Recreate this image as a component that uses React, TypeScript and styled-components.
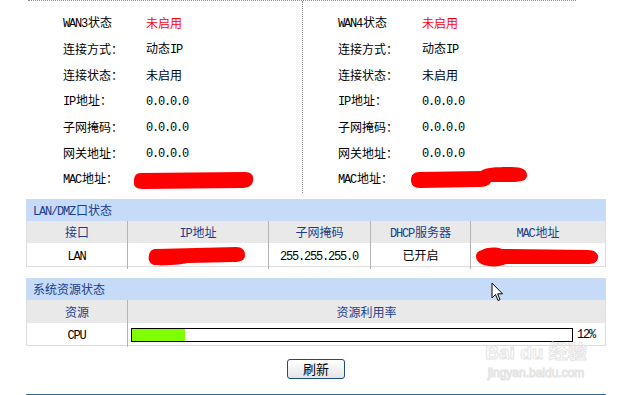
import styled, { createGlobalStyle } from 'styled-components'

const Global = createGlobalStyle`
  html, body {
    margin: 0;
    padding: 0;
    background: #ffffff;
  }
  body {
    font-family: 'Noto Sans CJK SC', 'Liberation Sans', sans-serif;
    font-size: 12px;
    color: #000000;
  }
`

const Page = styled.div`
  position: relative;
  width: 626px;
  height: 395px;
  overflow: hidden;
  padding-left: 26px;
  box-sizing: border-box;
`

const M = styled.span`
  font-family: 'Liberation Mono', monospace;
  font-size: 12px;
  letter-spacing: -1.2px;
  margin-right: 1px;
`

const WanPanel = styled.div`
  margin-left: 2px;
  width: 548px;
  border-top: 1px dotted #8c8c8c;
  display: grid;
  grid-template-columns: 275px 273px;
`

const WanCol = styled.div<{ $left?: boolean }>`
  padding: 8px 0 2px 35px;
  border-right: ${(p) => (p.$left ? '1px dotted #8c8c8c' : 'none')};
  box-sizing: border-box;
`

const WanRow = styled.div`
  display: flex;
  align-items: center;
  height: 26px;
`

const WanLabel = styled.span<{ $w: number }>`
  width: ${(p) => p.$w}px;
  flex: none;
`

const WanValue = styled.div<{ $red?: boolean }>`
  color: ${(p) => (p.$red ? '#ff0000' : '#000000')};
`

const Section = styled.section<{ $top: number }>`
  width: 580px;
  margin-top: ${(p) => p.$top}px;
`

const SectionHead = styled.div`
  height: 22px;
  line-height: 22px;
  background: #c6dbf8;
  color: #1a3d8c;
  padding-left: 7px;
`

const Grid = styled.div<{ $cols: string; $head?: boolean; $h: number }>`
  display: grid;
  grid-template-columns: ${(p) => p.$cols};
  height: ${(p) => p.$h}px;
  line-height: ${(p) => p.$h}px;
  background: ${(p) => (p.$head ? '#e9e9e9' : '#ffffff')};
  color: ${(p) => (p.$head ? '#1a3d8c' : '#000000')};
  border-left: 1px solid #dcdcdc;
  border-right: 1px solid #dcdcdc;
  border-bottom: ${(p) => (p.$head ? 'none' : '1px solid #dcdcdc')};
`

const Cell = styled.div`
  text-align: center;
  & + & {
    border-left: 1px solid #b4b4b4;
  }
`

const BarCell = styled(Cell)`
  display: flex;
  align-items: center;
  padding-left: 3px;
  gap: 4px;
`

const Bar = styled.div`
  width: 440px;
  height: 12px;
  border: 1px solid #000000;
  background: #ffffff;
`

const BarFill = styled.div`
  height: 100%;
  background: #80ff00;
`

const ButtonRow = styled.div`
  width: 580px;
  display: flex;
  justify-content: center;
  margin-top: 13px;
`

const RefreshButton = styled.button`
  width: 58px;
  height: 20px;
  border: 1px solid #1d4b7c;
  border-radius: 3px;
  background: linear-gradient(#ffffff, #e4e4e4);
  font-family: 'Noto Sans CJK SC', sans-serif;
  font-size: 13px;
  line-height: 18px;
  padding: 0;
  color: #000000;
`

const BottomRule = styled.div`
  width: 580px;
  height: 3px;
  margin-top: 15px;
  background: #2d6a98;
`

const Cursor = styled.svg`
  position: absolute;
  left: 491px;
  top: 282px;
`

const Watermark = styled.div`
  position: absolute;
  left: 480px;
  top: 343px;
  width: 112px;
  color: transparent;
  -webkit-text-stroke: 1px #e4e4e4;
  font-family: 'Liberation Sans', 'Noto Sans CJK SC', sans-serif;
  text-align: center;
  line-height: 1;
  pointer-events: none;
`

const WmBig = styled.div`
  font-size: 19px;
  font-weight: bold;
  white-space: nowrap;
`

const WmSmall = styled.div`
  font-size: 12px;
  margin-top: 5px;
`

const BlotSvg = styled.svg`
  display: inline-block;
  vertical-align: middle;
`

const Blot = ({ w, h, d, style }: { w: number; h: number; d: string; style?: React.CSSProperties }) => (
  <BlotSvg width={w} height={h} viewBox={`0 0 ${w} ${h}`} style={style}>
    <path d={d} fill='#ff0000' />
  </BlotSvg>
)

const labels: [string, React.ReactNode][] = [
  ['a', <>连接方式：</>],
  ['b', <>连接状态：</>],
  ['c', <><M>IP</M>地址：</>],
  ['d', <>子网掩码：</>],
  ['e', <>网关地址：</>],
]

const values = [
  <>动态<M>IP</M></>,
  <>未启用</>,
  <M>0.0.0.0</M>,
  <M>0.0.0.0</M>,
  <M>0.0.0.0</M>,
]

const WanColumn = ({ n, left }: { n: number; left?: boolean }) => {
  const lw = left ? 83 : 84
  return (
    <WanCol $left={left}>
      <WanRow>
        <WanLabel $w={lw}><M>WAN{n}</M>状态</WanLabel>
        <WanValue $red>未启用</WanValue>
      </WanRow>
      {labels.map(([k, label], i) => (
        <WanRow key={k}>
          <WanLabel $w={lw}>{label}</WanLabel>
          <WanValue>{values[i]}</WanValue>
        </WanRow>
      ))}
      <WanRow>
        <WanLabel $w={lw}><M>MAC</M>地址：</WanLabel>
        <WanValue>
          {left ? (
            <Blot
              w={121}
              h={19}
              d='M8 2 L112 1 C119 1 121 5 120 10 C119 15 115 17 108 17 L10 18 C3 18 0 15 1 10 C1 5 3 2 8 2 Z'
              style={{ display: 'block', marginLeft: -13, marginTop: 4 }}
            />
          ) : (
            <Blot
              w={117}
              h={21}
              d='M8 5 L70 4 C74 1 80 0 100 0 C112 0 116 3 116 8 C116 13 112 15 100 15 L80 15 C78 19 74 20 66 20 L9 21 C3 21 0 18 0 13 C0 8 3 5 8 5 Z'
              style={{ display: 'block', marginLeft: -11, marginTop: -1 }}
            />
          )}
        </WanValue>
      </WanRow>
    </WanCol>
  )
}

const lanCols = '100px 141px 102px 100px 1fr'
const sysCols = '100px 1fr'

const App = () => {
  const cpu = 12
  return (
    <Page>
      <Global />
      <WanPanel>
        <WanColumn n={3} left />
        <WanColumn n={4} />
      </WanPanel>

      <Section $top={6}>
        <SectionHead><M>LAN/DMZ</M>口状态</SectionHead>
        <Grid $cols={lanCols} $head $h={22}>
          <Cell>接口</Cell>
          <Cell><M>IP</M>地址</Cell>
          <Cell>子网掩码</Cell>
          <Cell><M>DHCP</M>服务器</Cell>
          <Cell><M>MAC</M>地址</Cell>
        </Grid>
        <Grid $cols={lanCols} $h={23}>
          <Cell><M>LAN</M></Cell>
          <Cell>
            <Blot
              w={97}
              h={20}
              d='M8 3 L88 1 C94 1 97 4 97 9 C97 14 93 16 86 16 L40 17 C30 19 12 20 6 19 C1 17 0 13 1 9 C2 5 4 3 8 3 Z'
              style={{ marginLeft: -4, marginTop: -1 }}
            />
          </Cell>
          <Cell><M>255.255.255.0</M></Cell>
          <Cell>已开启</Cell>
          <Cell>
            <Blot
              w={123}
              h={21}
              d='M6 4 C12 1 20 1 26 3 L112 4 C119 4 123 8 122 12 C121 17 117 18 110 18 L30 18 C24 21 14 21 8 19 C2 17 0 14 0 10 C0 7 2 5 6 4 Z'
              style={{ marginLeft: -2, marginTop: -1 }}
            />
          </Cell>
        </Grid>
      </Section>

      <Section $top={11}>
        <SectionHead>系统资源状态</SectionHead>
        <Grid $cols={sysCols} $head $h={23}>
          <Cell>资源</Cell>
          <Cell>资源利用率</Cell>
        </Grid>
        <Grid $cols={sysCols} $h={22}>
          <Cell><M>CPU</M></Cell>
          <BarCell>
            <Bar>
              <BarFill style={{ width: `${cpu}%` }} />
            </Bar>
            <M>{cpu}%</M>
          </BarCell>
        </Grid>
      </Section>

      <ButtonRow>
        <RefreshButton>刷新</RefreshButton>
      </ButtonRow>
      <BottomRule />

      <Watermark>
        <WmBig>Bai du 经验</WmBig>
        <WmSmall>jingyan.baidu.com</WmSmall>
      </Watermark>

      <Cursor width='13' height='20' viewBox='0 0 13 20'>
        <path d='M1 1 L1 16 L4.5 12.5 L7 18.5 L9 17.6 L6.6 11.8 L11.5 11.8 Z' fill='#ffffff' stroke='#000000' strokeWidth='1' strokeLinejoin='miter' />
      </Cursor>
    </Page>
  )
}

export default App
